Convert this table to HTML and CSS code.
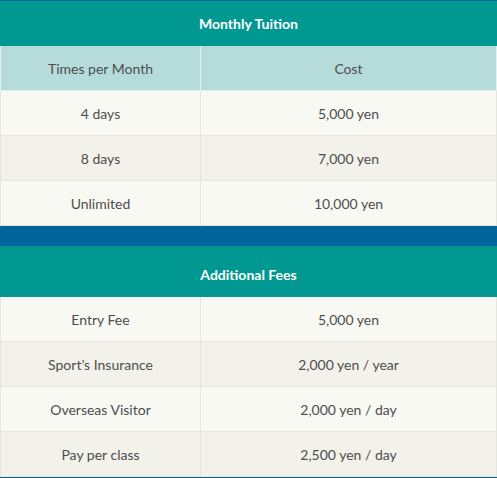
FILE: index.html
```html
<!DOCTYPE html>
<html>
<head>
<meta charset="utf-8">
<link rel="stylesheet" href="styles.css">
</head>
<body>
<div class="page">
  <table class="fees">
    <colgroup><col class="col1"><col class="col2"></colgroup>
    <thead>
      <tr><th class="title" colspan="2">Monthly Tuition</th></tr>
      <tr class="sub"><td>Times per Month</td><td>Cost</td></tr>
    </thead>
    <tbody>
      <tr class="odd"><td>4 days</td><td>5,000 yen</td></tr>
      <tr class="even"><td>8 days</td><td>7,000 yen</td></tr>
      <tr class="odd"><td>Unlimited</td><td>10,000 yen</td></tr>
    </tbody>
  </table>
  <table class="fees second">
    <colgroup><col class="col1"><col class="col2"></colgroup>
    <thead>
      <tr><th class="title tall" colspan="2">Additional Fees</th></tr>
    </thead>
    <tbody>
      <tr class="odd"><td>Entry Fee</td><td>5,000 yen</td></tr>
      <tr class="even"><td>Sport’s Insurance</td><td>2,000 yen / year</td></tr>
      <tr class="odd"><td>Overseas Visitor</td><td>2,000 yen / day</td></tr>
      <tr class="even"><td>Pay per class</td><td>2,500 yen / day</td></tr>
    </tbody>
  </table>
</div>
</body>
</html>
```
FILE: styles.css
```css
html, body {
  margin: 0;
  padding: 0;
  background: #00659a;
}
.page {
  width: 497px;
  padding-top: 1px;
  display: flex;
  flex-direction: column;
  gap: 20px;
}
.fees {
  width: 497px;
  border-collapse: collapse;
  table-layout: fixed;
  font-family: Lato, "Open Sans", sans-serif;
  font-size: 14px;
  color: #4d4d4d;
}
.col1 {
  width: 200px;
}
.second {
  border-top: 1px solid #e9f3f2;
}
.fees td, .fees th {
  border: 1px solid #e6e6e1;
  text-align: center;
  padding: 0;
  height: 44px;
}
.title {
  background: #009891;
  color: #ffffff;
  font-weight: bold;
  font-size: 14px;
  border-color: #009891 !important;
}
.fees .title {
  height: 43px;
}
.fees .title.tall {
  height: 43px;
  padding-top: 6px;
}
.sub td {
  background: #b5dcdb;
  border-color: #e2f0ef;
}
.odd td {
  background: #f9f9f4;
}
.even td {
  background: #f3f2ea;
}
```
